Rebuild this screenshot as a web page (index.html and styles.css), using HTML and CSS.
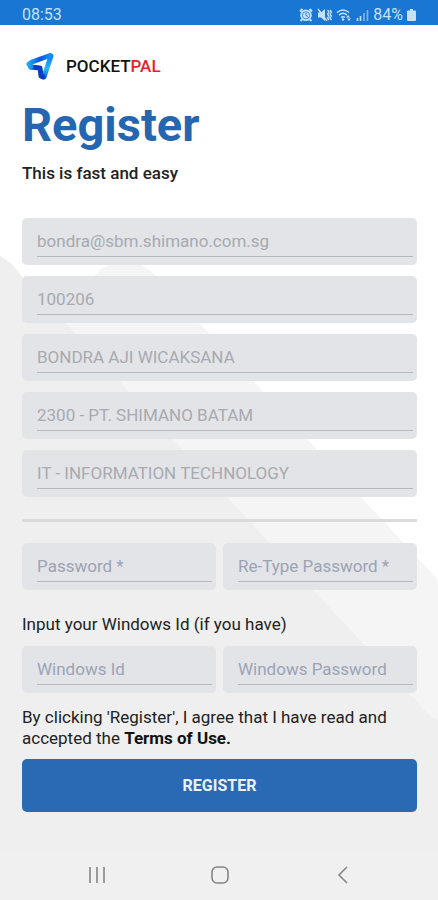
FILE: index.html
```html
<!DOCTYPE html>
<html lang="en">
<head>
<meta charset="utf-8">
<meta name="viewport" content="width=device-width, initial-scale=1">
<title>PocketPal - Register</title>
<link rel="stylesheet" href="styles.css">
</head>
<body>
<div class="screen">
  <svg class="backdrop" viewBox="0 0 438 900" preserveAspectRatio="none" aria-hidden="true">
    <path fill="#f5f5f5" d="M0 900V370L97 273Q106 263 123 262Q141 262 151 271L438 580V900Z"/>
    <path fill="#efefef" d="M0 900V256Q12 262 20 274L420 705Q431 718 438 720V900Z"/>
  </svg>
  <header class="status">
    <span>08:53</span>
    <div class="status-right">
      <svg class="status-icon" width="14" height="14" viewBox="0 0 14 14" aria-hidden="true">
        <path d="M1 3.500 3.500 1M13 3.500 10.500 1M3 11.500 1.500 13M11 11.500l1.500 1.500" stroke="currentColor" stroke-width="2"/>
        <circle cx="7" cy="7.300" r="5.800" fill="currentColor"/>
        <circle cx="7" cy="7.300" r="3.600" fill="none" stroke="#1976d2" stroke-width=".8"/>
        <path d="M7 5v2.500l1.800 1" fill="none" stroke="#1976d2"/>
      </svg>
      <svg class="status-icon" width="15" height="14" viewBox="0 0 15 14" aria-hidden="true">
        <path d="M1 4.500h3l4-3.500v12L4 9.500H1z" fill="currentColor"/>
        <path d="M1 1l9 12" stroke="currentColor" stroke-width="1.400"/>
        <path d="M10.500 2l1.500 2-1.500 2 1.500 2-1.500 2 1.500 2M13 2l1.500 2L13 6l1.500 2-1.500 2 1.500 2" fill="none" stroke="currentColor" stroke-width="1.300"/>
      </svg>
      <svg class="status-icon" width="16" height="14" viewBox="0 0 16 14" aria-hidden="true">
        <path d="M1 4.500Q7-.5 13 4.500M3 7q4-3.400 8 0M5 9.500q2-1.700 4 0" fill="none" stroke="currentColor" stroke-width="1.400"/>
        <circle cx="7" cy="11.500" r="1.200" fill="currentColor"/>
        <path d="M10 9.500l2-2.500 2 2.500zM11 10.500h4L13 13z" fill="currentColor"/>
      </svg>
      <svg class="status-icon" width="13" height="14" viewBox="0 0 13 14" aria-hidden="true">
        <path d="M1.500 13v-3M4.500 13V8" stroke="currentColor" stroke-width="1.600"/>
        <path d="M8 13V5M11.500 13V2" stroke="currentColor" stroke-width="1.600" opacity=".6"/>
      </svg>
      <span>84%</span>
      <svg class="status-icon" width="9" height="14" viewBox="0 0 9 14" aria-hidden="true">
        <path d="M3 1h3v1.500h2a1 1 0 0 1 1 1V12a1 1 0 0 1-1 1H1a1 1 0 0 1-1-1V3.500a1 1 0 0 1 1-1h2z" fill="currentColor"/>
      </svg>
    </div>
  </header>

  <main class="content">
    <div class="brand">
      <svg width="28" height="28" viewBox="0 0 28 28" aria-hidden="true">
        <defs>
          <linearGradient id="top" x1="0" y1="0" x2="1" y2="0"><stop offset="0" stop-color="#18a8f4"/><stop offset=".5" stop-color="#0c56e0"/><stop offset="1" stop-color="#1690f0"/></linearGradient>
          <linearGradient id="side" x1="0" y1="0" x2="0" y2="1"><stop offset="0" stop-color="#1479ea"/><stop offset=".6" stop-color="#28b9fa"/><stop offset="1" stop-color="#0b6ce8"/></linearGradient>
        </defs>
        <g fill="none" stroke-width="5" stroke-linecap="round" stroke-linejoin="round">
          <path d="M25 4 18 25" stroke="url(#side)"/>
          <path d="M17 25 15 24 14 16 5 15" stroke="#063fc0"/>
          <path d="M5 15 3 12 6 10 24 3.500" stroke="url(#top)"/>
        </g>
      </svg>
      <span class="brand-name">POCKET<span class="brand-accent">PAL</span></span>
    </div>
    <h1>Register</h1>
    <p class="tagline">This is fast and easy</p>

    <form>
      <div class="fields">
        <div class="field"><input type="email" aria-label="Email" value="bondra@sbm.shimano.com.sg" disabled></div>
        <div class="field"><input type="text" aria-label="Employee number" value="100206" disabled></div>
        <div class="field"><input type="text" aria-label="Name" value="BONDRA AJI WICAKSANA" disabled></div>
        <div class="field"><input type="text" aria-label="Company" value="2300 - PT. SHIMANO BATAM" disabled></div>
        <div class="field"><input type="text" aria-label="Department" value="IT - INFORMATION TECHNOLOGY" disabled></div>
      </div>
      <hr>
      <div class="pair">
        <div class="field"><input type="password" aria-label="Password" placeholder="Password *"></div>
        <div class="field"><input type="password" aria-label="Re-Type Password" placeholder="Re-Type Password *"></div>
      </div>
      <p class="hint">Input your Windows Id (if you have)</p>
      <div class="pair">
        <div class="field"><input type="text" aria-label="Windows Id" placeholder="Windows Id"></div>
        <div class="field"><input type="password" aria-label="Windows Password" placeholder="Windows Password"></div>
      </div>
      <p class="terms">By clicking 'Register', I agree that I have read and accepted the <a href="#terms">Terms of Use.</a></p>
      <button class="submit" type="submit">REGISTER</button>
    </form>
  </main>

  <nav class="navbar" aria-label="System navigation">
    <button type="button" aria-label="Recent apps"><svg width="20" height="20" viewBox="0 0 20 20"><path d="M3 2v16M10 2v16M17 2v16"/></svg></button>
    <button type="button" aria-label="Home"><svg width="20" height="20" viewBox="0 0 20 20"><rect x="2" y="2" width="16" height="16" rx="5"/></svg></button>
    <button type="button" aria-label="Back"><svg width="20" height="20" viewBox="0 0 20 20"><path d="M14 2 6 10l8 8"/></svg></button>
  </nav>
</div>
</body>
</html>
```
FILE: styles.css
```css
* {
  box-sizing: border-box;
}

body {
  margin: 0;
  font-family: Roboto, "Liberation Sans", sans-serif;
  color: #222;
  background: #fff;
}

.screen {
  position: relative;
  display: flex;
  flex-direction: column;
  min-height: 100vh;
}

.backdrop {
  position: absolute;
  inset: 0;
  z-index: -1;
  width: 100%;
  height: 100%;
}

.status {
  display: flex;
  align-items: center;
  justify-content: space-between;
  height: 25px;
  padding: 4px 22px 0;
  font-size: 16px;
  line-height: 20px;
  color: #c5e2fb;
  background: #1976d2;
}

.status-right {
  display: flex;
  align-items: center;
  gap: 4px;
}

.status-icon {
  display: block;
}

.content {
  padding: 27px 21px 0 22px;
}

.brand {
  display: flex;
  align-items: center;
  gap: 12px;
  height: 28px;
  padding-left: 4px;
}

.brand svg {
  overflow: visible;
}

.brand-name {
  font-size: 17px;
  font-weight: 500;
  color: #111;
}

.brand-accent {
  color: #e5222b;
}

h1 {
  margin: 17px 0 10px;
  font-size: 47px;
  font-weight: 700;
  line-height: 56px;
  color: #2566b1;
}

.tagline {
  margin: 0 0 35px;
  font-size: 17px;
  font-weight: 500;
  line-height: 20px;
}

.fields {
  display: flex;
  flex-direction: column;
  gap: 11px;
}

.pair {
  display: grid;
  grid-template-columns: 1fr 1fr;
  gap: 7px;
}

.field {
  height: 47px;
  padding: 7px 4px 7px 15px;
  border-radius: 5px;
  background: #e2e4e8;
}

.field input {
  display: block;
  width: 100%;
  height: 32px;
  padding: 0;
  border: 0;
  border-bottom: 1px solid #b5b8bf;
  border-radius: 0;
  outline: 0;
  font: 400 17px/20px Roboto, "Liberation Sans", sans-serif;
  color: #a8aaaf;
  background: transparent;
}

.field input::placeholder {
  color: #9ca3b4;
  opacity: 1;
}

hr {
  height: 3px;
  margin: 22px 0 21px;
  border: 0;
  background: #dadbdc;
}

.hint {
  margin: 24px 0 12px;
  font-size: 17px;
  line-height: 20px;
}

.terms {
  margin: 14px 0 10px;
  font-size: 17px;
  line-height: 21px;
}

.terms a {
  font-weight: 700;
  color: #111;
  text-decoration: none;
}

.submit {
  display: block;
  width: 100%;
  height: 53px;
  border: 0;
  border-radius: 5px;
  font: 700 16px/20px Roboto, "Liberation Sans", sans-serif;
  color: #e8f3ff;
  background: #2a6ab5;
}

.navbar {
  display: flex;
  justify-content: space-around;
  align-items: center;
  height: 50px;
  margin-top: auto;
  padding: 0 34px 0 36px;
  background: #f0f0f0;
}

.navbar button {
  display: flex;
  padding: 0;
  border: 0;
  background: none;
}

.navbar svg {
  fill: none;
  stroke: #858585;
  stroke-width: 1.6;
}
```
